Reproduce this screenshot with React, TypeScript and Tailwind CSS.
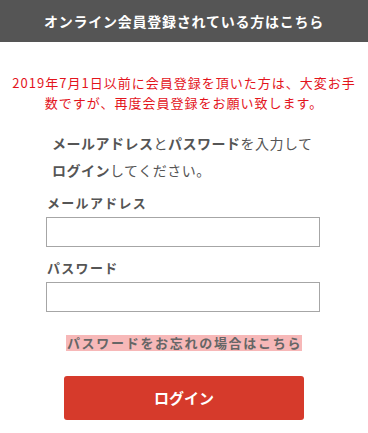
import React from 'react';

const font = { fontFamily: '"Noto Sans CJK JP", "Noto Sans", sans-serif' };

export default function App() {
  return (
    <div className="w-[368px] h-[433px] bg-white overflow-hidden" style={font}>
      <div className="h-[42px] bg-[#555555] flex items-center justify-center">
        <h2 className="text-white text-[14px] font-bold tracking-[0.75px] leading-none">
          オンライン会員登録されている方はこちら
        </h2>
      </div>

      <p className="mt-[31px] text-center text-[13px] leading-[20px] tracking-[1px] text-[#e3141c]">
        2019年7月1日以前に会員登録を頂いた方は、大変お手
        <br />
        数ですが、再度会員登録をお願い致します。
      </p>

      <p className="mt-[17px] ml-[52px] text-[14px] leading-[27px] tracking-[0.5px] text-[#555555]">
        <b>メールアドレス</b>と<b>パスワード</b>を入力して
        <br />
        <b>ログイン</b>してください。
      </p>

      <form className="ml-[46px] w-[274px] mt-[9px]">
        <label className="block ml-[1px] text-[13px] leading-[20px] font-bold tracking-[1.3px] text-[#555555]">
          メールアドレス
        </label>
        <input
          type="email"
          className="block mt-[4px] w-full h-[30px] border border-[#a6a6a6] outline-none"
        />
        <label className="block mt-[11px] ml-[1px] text-[13px] leading-[20px] font-bold tracking-[1.3px] text-[#555555]">
          パスワード
        </label>
        <input
          type="password"
          className="block mt-[4px] w-full h-[30px] border border-[#a6a6a6] outline-none"
        />
      </form>

      <div className="mt-[23px] flex justify-center">
        <a className="bg-[#f7b8b8] text-[#666666] text-[13px] font-bold leading-[16px] tracking-[1.7px] pl-[1px]">
          パスワードをお忘れの場合はこちら
        </a>
      </div>

      <div className="mt-[25px] flex justify-center">
        <button
          type="button"
          className="w-[240px] h-[44px] rounded-[3px] bg-[#d63a2b] text-white text-[15px] font-bold"
        >
          ログイン
        </button>
      </div>
    </div>
  );
}
